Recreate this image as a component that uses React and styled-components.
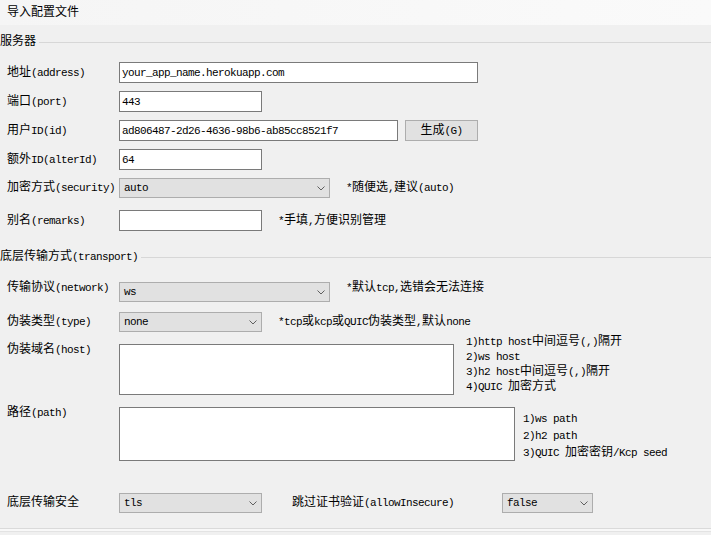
import React from "react";
import styled, { createGlobalStyle } from "styled-components";

const GlobalStyle = createGlobalStyle`
  html, body { margin: 0; padding: 0; }
  body {
    background: #f0f0f0;
    color: #000;
    font-family: "Liberation Mono", monospace;
    font-size: 11px;
  }
`;

const Text = styled.span`
  white-space: pre;
`;

const Han = styled.span`
  font-family: "Noto Sans CJK SC", sans-serif;
  font-size: 12px;
  line-height: 0;
`;

const Lat = styled.span`
  font-family: "Liberation Mono", monospace;
  font-size: 11px;
  letter-spacing: -0.6px;
  line-height: 0;
`;

const isHan = (ch) => /[\u2E80-\u9FFF\uFF00-\uFFEF\u3000-\u303F]/.test(ch);

function T({ children }) {
  const s = String(children);
  const runs = [];
  let cur = "";
  let curH = null;
  for (const ch of s) {
    const h = isHan(ch);
    if (curH === null || h === curH) {
      cur += ch;
      curH = h;
    } else {
      runs.push([curH, cur]);
      cur = ch;
      curH = h;
    }
  }
  if (cur) runs.push([curH, cur]);
  return (
    <Text>
      {runs.map(([h, t], i) => (h ? <Han key={i}>{t}</Han> : <Lat key={i}>{t}</Lat>))}
    </Text>
  );
}

const Page = styled.div`
  width: 711px;
  height: 535px;
  overflow: hidden;
  display: flex;
  flex-direction: column;
  background: #f0f0f0;
`;

const Header = styled.div`
  height: 25px;
  flex-shrink: 0;
  display: flex;
  align-items: center;
  padding-left: 7px;
  background: linear-gradient(to right, #f5f5f5, #fafafa);
  line-height: 14px;
`;

const Form = styled.div`
  flex: 1;
  display: flex;
  flex-direction: column;
`;

const GroupTitle = styled.div`
  display: flex;
  align-items: center;
  height: 14px;
  margin-top: ${(p) => p.$mt}px;
  line-height: 14px;
  &::after {
    content: "";
    flex: 1;
    height: 1px;
    margin-left: 3px;
    background: #d7d7d7;
  }
`;

const Row = styled.div`
  display: flex;
  align-items: ${(p) => p.$align || "center"};
  padding-left: 7px;
  margin-top: ${(p) => p.$mt}px;
`;

const Label = styled.div`
  width: ${(p) => p.$w || 112}px;
  flex-shrink: 0;
  line-height: 12px;
  margin-left: ${(p) => p.$ml || 0}px;
`;

const Input = styled.input`
  box-sizing: border-box;
  width: ${(p) => p.$w}px;
  height: 21px;
  margin: 0;
  padding: 0 2px;
  border: 1px solid #7a7a7a;
  background: #fff;
  font-family: "Liberation Mono", monospace;
  font-size: 11px;
  letter-spacing: -0.6px;
  color: #000;
  outline: none;
`;

const TextArea = styled.textarea`
  box-sizing: border-box;
  width: ${(p) => p.$w}px;
  height: ${(p) => p.$h}px;
  margin: 0;
  padding: 2px;
  border: 1px solid #7a7a7a;
  background: #fff;
  resize: none;
  outline: none;
  font-family: "Liberation Mono", monospace;
  font-size: 11px;
`;

const Combo = styled.div`
  box-sizing: border-box;
  width: ${(p) => p.$w}px;
  height: 20px;
  flex-shrink: 0;
  display: flex;
  align-items: center;
  justify-content: space-between;
  padding: 0 4px 0 4px;
  border: 1px solid #adadad;
  background: #e1e1e1;
  line-height: 12px;
  margin-left: ${(p) => p.$ml || 0}px;
`;

const Button = styled.button`
  box-sizing: border-box;
  width: 73px;
  height: 21px;
  margin: 0 0 0 7px;
  padding: 0;
  border: 1px solid #adadad;
  background: #e1e1e1;
  color: #000;
  font-family: "Liberation Mono", monospace;
  font-size: 11px;
  line-height: 12px;
  display: flex;
  align-items: center;
  justify-content: center;
`;

const Hint = styled.div`
  margin-left: ${(p) => p.$ml}px;
  line-height: 12px;
`;

const Notes = styled.div`
  margin-left: ${(p) => p.$ml}px;
  margin-top: ${(p) => p.$mt}px;
  line-height: ${(p) => p.$lh}px;
  display: flex;
  flex-direction: column;
`;

const Footer = styled.div`
  height: 6px;
  flex-shrink: 0;
  border-top: 1px solid #dadada;
  background: linear-gradient(#f8f8f8 0 2px, #e3e3e3 2px 3px, #f0f0f0 3px);
`;

const Chevron = () => (
  <svg width="8" height="5" viewBox="0 0 8 5">
    <polyline points="0.5,0.5 4,4 7.5,0.5" fill="none" stroke="#5f5f5f" strokeWidth="1" />
  </svg>
);

function Select({ w, ml, value }) {
  return (
    <Combo $w={w} $ml={ml}>
      <T>{value}</T>
      <Chevron />
    </Combo>
  );
}

export default function App() {
  return (
    <Page>
      <GlobalStyle />
      <Header>
        <T>导入配置文件</T>
      </Header>
      <Form>
        <GroupTitle $mt={10}>
          <T>服务器</T>
        </GroupTitle>
        <Row $mt={13}>
          <Label><T>地址(address)</T></Label>
          <Input $w={359} defaultValue="your_app_name.herokuapp.com" />
        </Row>
        <Row $mt={8}>
          <Label><T>端口(port)</T></Label>
          <Input $w={143} defaultValue="443" />
        </Row>
        <Row $mt={8}>
          <Label><T>用户ID(id)</T></Label>
          <Input $w={279} defaultValue="ad806487-2d26-4636-98b6-ab85cc8521f7" />
          <Button><T>生成(G)</T></Button>
        </Row>
        <Row $mt={8}>
          <Label><T>额外ID(alterId)</T></Label>
          <Input $w={143} defaultValue="64" />
        </Row>
        <Row $mt={8}>
          <Label><T>加密方式(security)</T></Label>
          <Select w={211} value="auto" />
          <Hint $ml={16}><T>*随便选,建议(auto)</T></Hint>
        </Row>
        <Row $mt={12}>
          <Label><T>别名(remarks)</T></Label>
          <Input $w={143} defaultValue="" />
          <Hint $ml={16}><T>*手填,方便识别管理</T></Hint>
        </Row>

        <GroupTitle $mt={19}>
          <T>底层传输方式(transport)</T>
        </GroupTitle>
        <Row $mt={18} $align="flex-start">
          <Label><T>传输协议(network)</T></Label>
          <Select w={211} value="ws" />
          <Hint $ml={16}><T>*默认tcp,选错会无法连接</T></Hint>
        </Row>
        <Row $mt={10}>
          <Label><T>伪装类型(type)</T></Label>
          <Select w={143} value="none" />
          <Hint $ml={16}><T>*tcp或kcp或QUIC伪装类型,默认none</T></Hint>
        </Row>
        <Row $mt={12} $align="flex-start">
          <Label><T>伪装域名(host)</T></Label>
          <TextArea $w={335} $h={51} />
          <Notes $ml={12} $mt={-9} $lh={15}>
            <div><T>1)http host中间逗号(,)隔开</T></div>
            <div><T>2)ws host</T></div>
            <div><T>3)h2 host中间逗号(,)隔开</T></div>
            <div><T>4)QUIC 加密方式</T></div>
          </Notes>
        </Row>
        <Row $mt={12} $align="flex-start">
          <Label><T>路径(path)</T></Label>
          <TextArea $w={396} $h={54} />
          <Notes $ml={8} $mt={4} $lh={17}>
            <div><T>1)ws path</T></div>
            <div><T>2)h2 path</T></div>
            <div><T>3)QUIC 加密密钥/Kcp seed</T></div>
          </Notes>
        </Row>
        <Row $mt={31}>
          <Label><T>底层传输安全</T></Label>
          <Select w={143} value="tls" />
          <Label $w={210} $ml={30}><T>跳过证书验证(allowInsecure)</T></Label>
          <Select w={91} value="false" />
        </Row>
      </Form>
      <Footer />
    </Page>
  );
}
